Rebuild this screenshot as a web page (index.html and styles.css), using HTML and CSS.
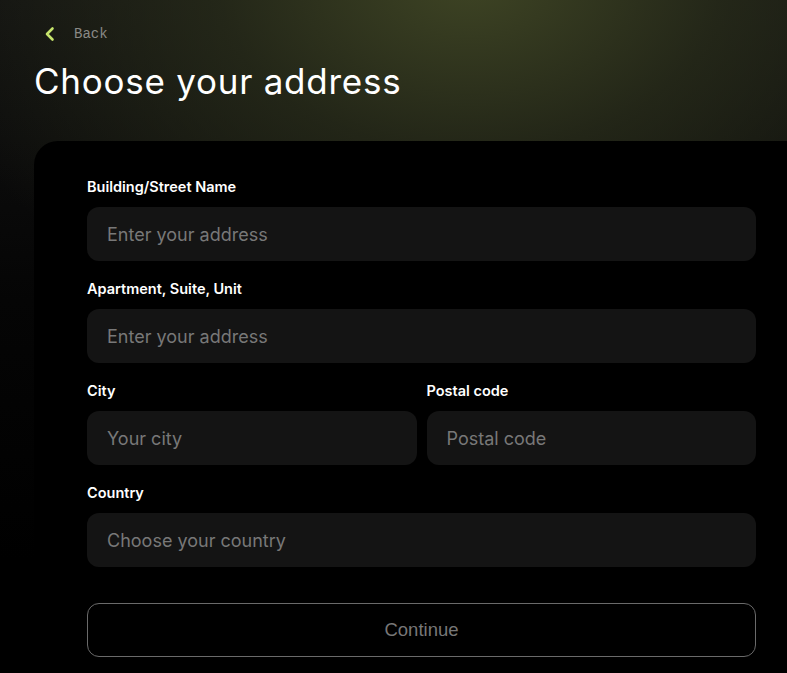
FILE: index.html
```html
<!DOCTYPE html>
<html lang="en">
<head>
  <meta charset="UTF-8">
  <meta name="viewport" content="width=device-width, initial-scale=1.0">
  <title>Choose your address</title>
  <link rel="stylesheet" href="styles.css">
</head>
<body>
  <div class="page">
    <header class="top">
      <a class="back" href="#">
        <svg class="back-icon" width="12" height="16" viewBox="0 0 12 16" fill="none">
          <path d="M8.5 2.5L3 8l5.5 5.5" stroke="#c6e46c" stroke-width="2.6" stroke-linecap="round" stroke-linejoin="round"/>
        </svg>
        <span>Back</span>
      </a>
      <h1>Choose your address</h1>
    </header>

    <form class="card">
      <div class="field">
        <label for="street">Building/Street Name</label>
        <input type="text" id="street" placeholder="Enter your address">
      </div>

      <div class="field">
        <label for="apt">Apartment, Suite, Unit</label>
        <input type="text" id="apt" placeholder="Enter your address">
      </div>

      <div class="row">
        <div class="field">
          <label for="city">City</label>
          <input type="text" id="city" placeholder="Your city">
        </div>
        <div class="field">
          <label for="postal">Postal code</label>
          <input type="text" id="postal" placeholder="Postal code">
        </div>
      </div>

      <div class="field">
        <label for="country">Country</label>
        <input type="text" id="country" placeholder="Choose your country">
      </div>

      <button type="button" class="continue">Continue</button>
    </form>
  </div>
</body>
</html>
```

FILE: styles.css
```css
body, html {
  margin: 0;
  padding: 0;
  height: 100%;
  overflow: hidden;
  background: #000;
  font-family: Inter, 'Noto Sans', sans-serif;
}

.page {
  min-height: 100%;
  background:
    radial-gradient(ellipse 560px 380px at 470px -20px, rgba(62, 68, 36, 1) 0%, rgba(42, 46, 27, 0.75) 45%, rgba(16, 16, 14, 0) 100%),
    linear-gradient(180deg, #111 0%, #0c0c0c 140px, #050505 300px, #000 560px);
}

.top {
  padding: 25px 0 0 34px;
  height: 116px;
}

.back {
  display: flex;
  align-items: center;
  gap: 18px;
  padding-left: 10px;
  text-decoration: none;
  color: #8a8a86;
  font-family: 'Liberation Mono', monospace;
  font-size: 14px;
  height: 18px;
}

.back-icon {
  display: block;
}

h1 {
  margin: 18px 0 0;
  color: #fff;
  font-family: Inter, sans-serif;
  font-weight: 400;
  font-size: 35px;
  line-height: 40px;
  letter-spacing: 0.75px;
}

.card {
  margin-left: 34px;
  background: #000;
  border-radius: 24px 0 0 0;
  padding: 37px 31px 40px 53px;
  display: flex;
  flex-direction: column;
  gap: 19px;
}

.field {
  display: flex;
  flex-direction: column;
  gap: 12px;
  flex: 1;
}

.field label {
  color: #fff;
  font-size: 14.5px;
  font-weight: 600;
  line-height: 17px;
}

.field input {
  height: 54px;
  box-sizing: border-box;
  border: none;
  border-radius: 12px;
  background: #141414;
  padding: 0 20px;
  color: #fff;
  font-family: Inter, sans-serif;
  font-size: 18px;
  outline: none;
}

.field input::placeholder {
  color: #787878;
}

.row {
  display: flex;
  gap: 10px;
}

.continue {
  margin-top: 17px;
  height: 54px;
  background: transparent;
  border: 1px solid #6a6a6a;
  border-radius: 12px;
  color: #777;
  font-family: 'Liberation Sans', Arial, sans-serif;
  font-size: 18.5px;
  cursor: pointer;
}
```
